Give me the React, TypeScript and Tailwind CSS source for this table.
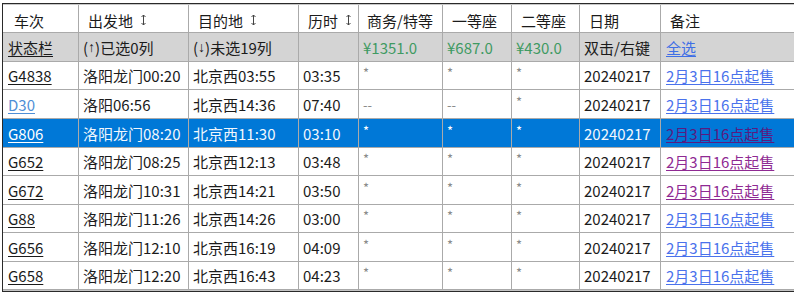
import React from "react";

type Row = {
  no: string;
  from: string;
  to: string;
  dur: string;
  biz: string;
  first: string;
  second: string;
  note: "blue" | "purple";
  light?: boolean;
  selected?: boolean;
};

const rows: Row[] = [
  { no: "G4838", from: "洛阳龙门00:20", to: "北京西03:55", dur: "03:35", biz: "*", first: "*", second: "*", note: "blue" },
  { no: "D30", from: "洛阳06:56", to: "北京西14:36", dur: "07:40", biz: "--", first: "--", second: "*", note: "blue", light: true },
  { no: "G806", from: "洛阳龙门08:20", to: "北京西11:30", dur: "03:10", biz: "*", first: "*", second: "*", note: "purple", selected: true },
  { no: "G652", from: "洛阳龙门08:25", to: "北京西12:13", dur: "03:48", biz: "*", first: "*", second: "*", note: "purple" },
  { no: "G672", from: "洛阳龙门10:31", to: "北京西14:21", dur: "03:50", biz: "*", first: "*", second: "*", note: "purple" },
  { no: "G88", from: "洛阳龙门11:26", to: "北京西14:26", dur: "03:00", biz: "*", first: "*", second: "*", note: "blue" },
  { no: "G656", from: "洛阳龙门12:10", to: "北京西16:19", dur: "04:09", biz: "*", first: "*", second: "*", note: "blue" },
  { no: "G658", from: "洛阳龙门12:20", to: "北京西16:43", dur: "04:23", biz: "*", first: "*", second: "*", note: "blue" },
];

// row heights alternate so the grid lines land where the screenshot has them
const heights = ["h-[28px]", "h-[29px]", "h-[29px]", "h-[28px]", "h-[29px]", "h-[28px]", "h-[29px]", "h-[28px]"];

const grid = "grid grid-cols-[76px_110px_110px_60px_84px_69px_68px_81px_1fr]";
const cell = "flex items-center border-r border-[#aaaaaa] pl-[4px] whitespace-nowrap overflow-hidden";

function Head({ children, first }: { children: React.ReactNode; first?: boolean }) {
  return <div className={`${cell} ${first ? "pl-[11px]" : "pl-[9px]"} pt-[3px]`}>{children}</div>;
}

function Sort() {
  return (
    <svg className="ml-[7px]" width="7" height="12" viewBox="0 0 7 12" fill="none" stroke="#444" strokeWidth="1">
      <path d="M3.5 1v10M1.5 3l2-2 2 2M1.5 9l2 2 2-2" />
    </svg>
  );
}

function Arrow({ c }: { c: string }) {
  return <span className="font-['Liberation_Sans',sans-serif] text-[14px]">{c}</span>;
}

export default function App() {
  return (
    <div className="w-[794px] h-[295px] overflow-hidden bg-white pt-[3px] pl-[2px] font-['Noto_Sans_CJK_SC',sans-serif] text-[15px] leading-none text-[#1b1b1b]">
      <div className="w-[820px] border-t border-l border-[#2a2a2a]">
        <div className="border-t border-[#c8c8c8]">
          <div className={`${grid} h-[28px] border-b border-[#aaaaaa] bg-white`}>
            <Head first>车次</Head>
            <Head>出发地<Sort /></Head>
            <Head>目的地<Sort /></Head>
            <Head>历时<Sort /></Head>
            <div className={`${cell} pl-[8px] pt-[3px]`}>商务/特等</div>
            <Head>一等座</Head>
            <Head>二等座</Head>
            <Head>日期</Head>
            <Head>备注</Head>
          </div>

          <div className={`${grid} h-[29px] border-b border-[#aaaaaa] bg-[#d4d4d4]`}>
            <div className={`${cell} pl-[5px]`}><span className="underline underline-offset-2">状态栏</span></div>
            <div className={cell}>(<Arrow c="↑" />)已选0列</div>
            <div className={cell}>(<Arrow c="↓" />)未选19列</div>
            <div className={cell}></div>
            <div className={`${cell} text-[#3f9a62]`}>¥1351.0</div>
            <div className={`${cell} text-[#3f9a62]`}>¥687.0</div>
            <div className={`${cell} text-[#3f9a62]`}>¥430.0</div>
            <div className={cell}>双击/右键</div>
            <div className={`${cell} pl-[5px]`}><span className="text-[#3f6fe6] underline underline-offset-2">全选</span></div>
          </div>

          {rows.map((r, i) => {
            const sel = r.selected;
            const star = sel ? "text-white" : "text-[#8a8a8a]";
            const noColor = sel ? "text-white" : r.light ? "text-[#4f8fd6]" : "text-[#1b1b1b]";
            const noteColor = sel ? "text-[#5a1a80]" : r.note === "purple" ? "text-[#8f2a93]" : "text-[#4a72ec]";
            return (
              <div
                key={r.no}
                className={`${grid} ${heights[i]} border-b border-[#aaaaaa] ${sel ? "bg-[#0078d7] text-[#f2f7fd]" : "bg-white"}`}
              >
                <div className={`${cell} pl-[5px]`}>
                  <span className={`${noColor} underline underline-offset-2`}>{r.no}</span>
                </div>
                <div className={cell}>{r.from}</div>
                <div className={cell}>{r.to}</div>
                <div className={cell}>{r.dur}</div>
                <div className={`${cell} ${star} text-[13px] ${r.biz === "*" ? "pb-[6px]" : ""}`}>{r.biz}</div>
                <div className={`${cell} ${star} text-[13px] ${r.first === "*" ? "pb-[6px]" : ""}`}>{r.first}</div>
                <div className={`${cell} ${star} text-[13px] pb-[6px]`}>{r.second}</div>
                <div className={cell}>20240217</div>
                <div className={`${cell} pl-[5px]`}>
                  <span className={`${noteColor} underline underline-offset-2`}>2月3日16点起售</span>
                </div>
              </div>
            );
          })}

          <div className="h-[1px] bg-[#c4c4c4]" />
          <div className="h-[1px] bg-[#2a2a2a]" />
        </div>
      </div>
    </div>
  );
}
